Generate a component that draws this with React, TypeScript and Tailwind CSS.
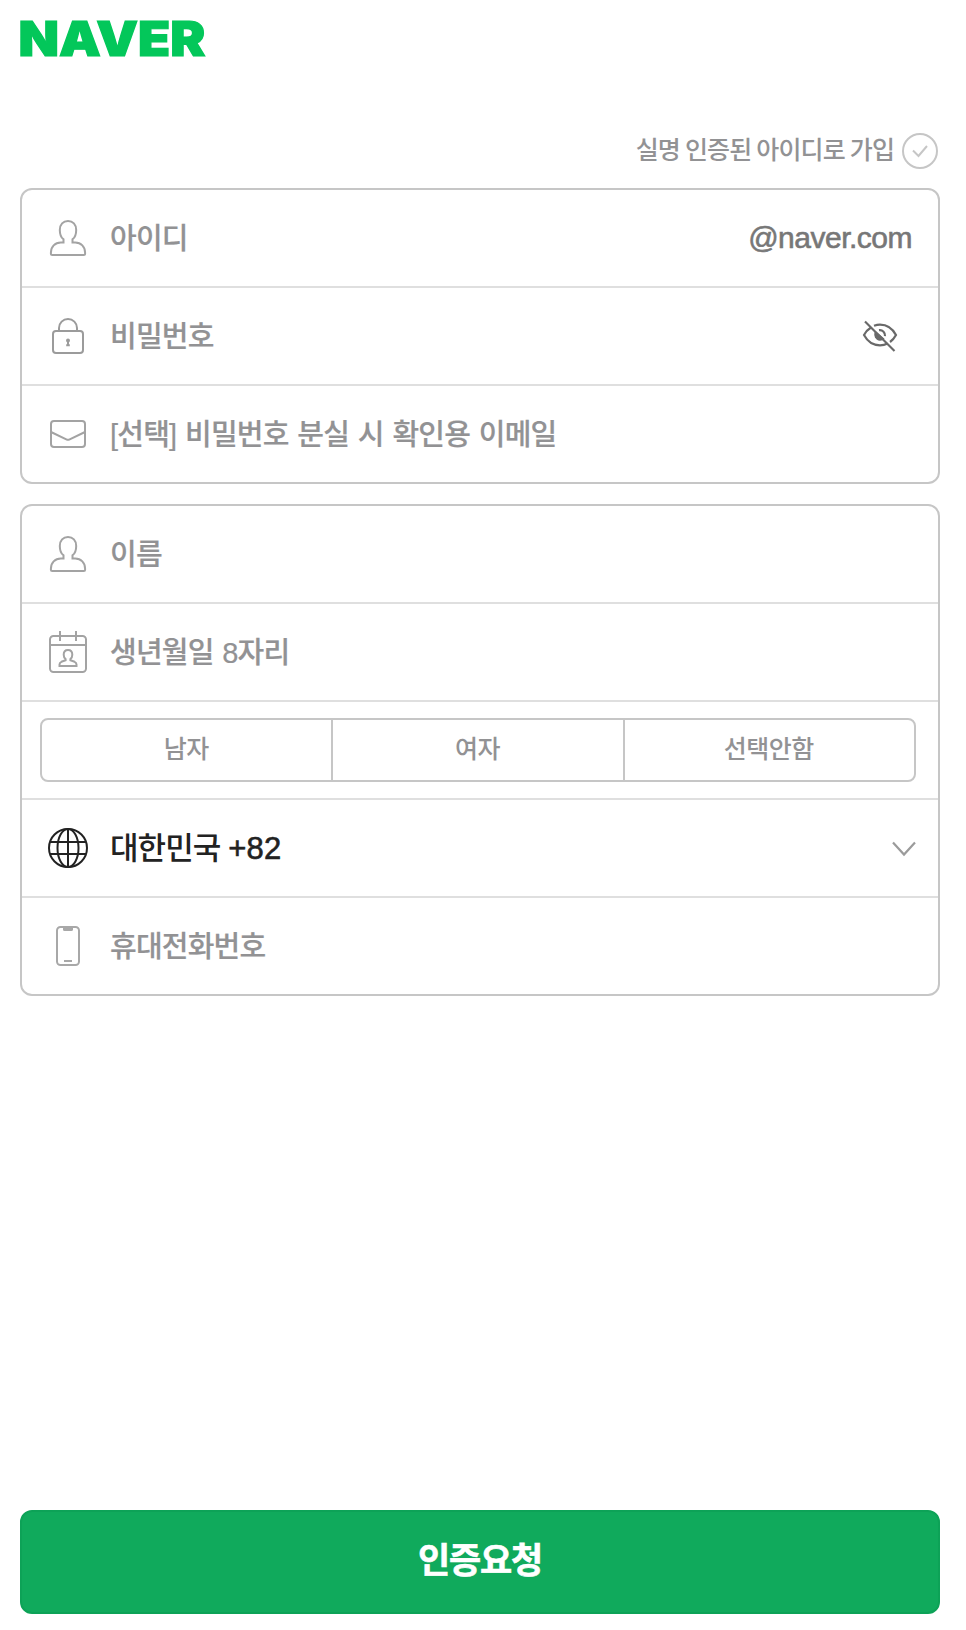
import { useState } from 'react'
import type { ReactNode } from 'react'

const GENDERS = ['남자', '여자', '선택안함']

function Logo() {
  return (
    <svg width="190" height="40" viewBox="0 0 190 40" className="block overflow-visible">
      <text
        x="-1.5"
        y="37.8"
        textLength="187"
        lengthAdjust="spacingAndGlyphs"
        className="fill-[#03c75a] stroke-[#03c75a] stroke-[1.2] font-['Inter',sans-serif] text-[48.5px] font-black"
      >
        NAVER
      </text>
    </svg>
  )
}

function UserIcon() {
  return (
    <svg width="40" height="40" viewBox="0 0 40 40" fill="none" stroke="#a3a3a3" strokeWidth="2">
      <path d="M15.5 24.5v-3.2c-2.4-1.8-3.7-5.3-3.7-9.4C11.8 6.5 15.2 2.9 20 2.9s8.2 3.6 8.2 9c0 4.1-1.3 7.6-3.7 9.4v3.2h2.7c5.8 0 9.9 4.2 9.9 10.2v1.1c0 .8-.5 1.3-1.3 1.3H4.2c-.8 0-1.3-.5-1.3-1.3v-1.1c0-6 4.1-10.200 9.900-10.200z" />
    </svg>
  )
}

function LockIcon() {
  return (
    <svg width="40" height="40" viewBox="0 0 40 40" fill="none" stroke="#9b9b9b" strokeWidth="2">
      <path d="M11 14v-2a9 9 0 0 1 18 0V14" />
      <rect x="5" y="15" width="30" height="22" rx="3" />
      <circle cx="20" cy="24.5" r="2" fill="#9b9b9b" stroke="none" />
      <path d="M20 24v5.600M18.200 29.200h3.600" />
    </svg>
  )
}

function MailIcon() {
  return (
    <svg width="40" height="40" viewBox="0 0 40 40" fill="none" stroke="#a3a3a3" strokeWidth="2">
      <rect x="3" y="7" width="34" height="26" rx="3" />
      <path d="M3 18l15.800 7.600q1.200.5 2.400 0L37 18" />
    </svg>
  )
}

function CalendarIcon() {
  return (
    <svg width="40" height="44" viewBox="0 0 40 44" fill="none" stroke="#a3a3a3" strokeWidth="2">
      <rect x="2" y="6" width="36" height="36" rx="3.5" />
      <path d="M2 15h36M12 1v10M28 1v10" />
      <path d="M17.600 30.300v-1.200c-1.200-1-1.900-2.400-1.900-4.300 0-2.800 1.700-4.700 4.300-4.700s4.300 1.900 4.300 4.700c0 1.900-.7 3.300-1.900 4.300v1.200l4.200 1.500c1.200.5 1.900 1.400 1.900 2.600v1.500h-17v-1.500c0-1.200.7-2.100 1.900-2.600z" />
    </svg>
  )
}

function GlobeIcon() {
  return (
    <svg width="40" height="40" viewBox="0 0 40 40" fill="none" stroke="#222222" strokeWidth="2">
      <circle cx="20" cy="20" r="19" />
      <ellipse cx="20" cy="20" rx="10.5" ry="19" />
      <path d="M20 1v38M2 14h36M2 26h36" />
    </svg>
  )
}

function PhoneIcon() {
  return (
    <svg width="40" height="40" viewBox="0 0 40 40" fill="none" stroke="#a8a8a8" strokeWidth="2">
      <rect x="9" y="1" width="22" height="38" rx="3.5" />
      <path d="M15 1h10v2.400q0 1.600-1.600 1.600h-6.800Q15 5 15 3.400z" fill="#a8a8a8" stroke="none" />
      <path d="M16 35h8" />
    </svg>
  )
}

function EyeOffIcon() {
  return (
    <svg width="36" height="36" viewBox="0 0 36 36" fill="none" stroke="#696969" strokeWidth="2.2">
      <path d="M12 7.700c2-.7 4-1.100 6-1.100 6.500 0 12.500 3.900 16 10.400-1.600 3-3.600 5.200-6 7" />
      <path d="M9 9.500C6 11.300 3.500 14.200 2 17c3.500 6.500 9.500 10.300 16 10.300 2.700 0 5.200-.6 7.600-1.800" />
      <path d="M17 12.200c3.600-.5 6.500 2.400 6 6" />
      <path d="M13.300 12.800c-2.700 3.800.1 9.900 4.700 9.900 1.800 0 3.400-.7 4.500-1.900z" fill="#696969" stroke="none" />
      <path d="M3 3.500l29.500 29.500" />
    </svg>
  )
}

interface RowProps {
  icon: ReactNode
  children: ReactNode
  right?: ReactNode
}

function Row({ icon, children, right }: RowProps) {
  return (
    <div className="box-content flex h-24 items-center">
      <div className="ml-[26px] flex w-10 shrink-0 justify-center">{icon}</div>
      <div className="ml-[22px] flex-1">{children}</div>
      {right}
    </div>
  )
}

function Hint({ children }: { children: ReactNode }) {
  return (
    <span className="block pt-px text-[29px] leading-10 font-medium tracking-[-0.8px] whitespace-nowrap text-[#929294] [-webkit-text-stroke:0.2px] [word-spacing:1.5px]">
      {children}
    </span>
  )
}

export default function App() {
  const [gender, setGender] = useState('')

  return (
    <div className="flex h-[1630px] w-[966px] flex-col bg-white pl-5 font-['Liberation_Sans','Noto_Sans_CJK_KR',sans-serif]">
      <header className="pt-[18px]">
        <Logo />
      </header>

      <div className="mt-[75px] flex h-9 w-[918px] items-center justify-end gap-2">
        <span className="text-[25px] font-medium tracking-[-0.9px] text-[#929294] [word-spacing:-1px]">실명 인증된 아이디로 가입</span>
        <svg width="36" height="36" viewBox="0 0 36 36" fill="none" stroke="#c6c6c6" strokeWidth="2">
          <circle cx="18" cy="18" r="17" />
          <path d="M11 17.500l5.500 5.500 8.500-10" />
        </svg>
      </div>

      <section className="mt-[19px] w-[920px] divide-y-2 divide-[#dfdfdf] rounded-xl border-2 border-[#c6c6c6]">
        <Row
          icon={<UserIcon />}
          right={<span className="mr-[26px] pb-0.5 text-[30px] tracking-[-0.5px] text-[#777777] [-webkit-text-stroke:0.6px]">@naver.com</span>}
        >
          <Hint>아이디</Hint>
        </Row>
        <Row icon={<LockIcon />} right={<button type="button" className="mr-10"><EyeOffIcon /></button>}>
          <Hint>비밀번호</Hint>
        </Row>
        <Row icon={<MailIcon />}>
          <Hint>[선택] 비밀번호 분실 시 확인용 이메일</Hint>
        </Row>
      </section>

      <section className="mt-5 w-[920px] divide-y-2 divide-[#dfdfdf] rounded-xl border-2 border-[#c6c6c6]">
        <Row icon={<UserIcon />}>
          <Hint>이름</Hint>
        </Row>
        <Row icon={<CalendarIcon />}>
          <Hint>생년월일 8자리</Hint>
        </Row>
        <div className="py-4 pr-[22px] pl-[18px]">
          <div className="flex h-16 divide-x-2 divide-[#c6c6c6] rounded-lg border-2 border-[#c6c6c6]">
            {GENDERS.map((item) => (
              <button
                key={item}
                type="button"
                aria-pressed={gender === item}
                onClick={() => setGender(item)}
                className="flex-1 basis-0 pr-px text-[25px] font-medium tracking-[-0.5px] text-[#929294]"
              >
                {item}
              </button>
            ))}
          </div>
        </div>
        <Row
          icon={<GlobeIcon />}
          right={
            <svg width="24" height="16" viewBox="0 0 24 16" fill="none" stroke="#9b9b9b" strokeWidth="2.2" className="mt-0.5 mr-[22px]">
              <path d="M1 1.500l11 12 11-12" />
            </svg>
          }
        >
          <span className="block pt-px text-[31px] leading-10 font-medium tracking-[-0.9px] text-[#222222]">
            대한민국 <span className="tracking-[0.2px] [-webkit-text-stroke:0.6px]">+82</span>
          </span>
        </Row>
        <Row icon={<PhoneIcon />}>
          <Hint>휴대전화번호</Hint>
        </Row>
      </section>

      <button
        type="button"
        className="mt-auto mb-4 h-[104px] w-[920px] rounded-xl border-2 border-[#0da257] bg-[#10aa5c] pb-0.5 text-[35px] font-bold tracking-[-1.2px] text-white [-webkit-text-stroke:0.6px]"
      >
        인증요청
      </button>
    </div>
  )
}
